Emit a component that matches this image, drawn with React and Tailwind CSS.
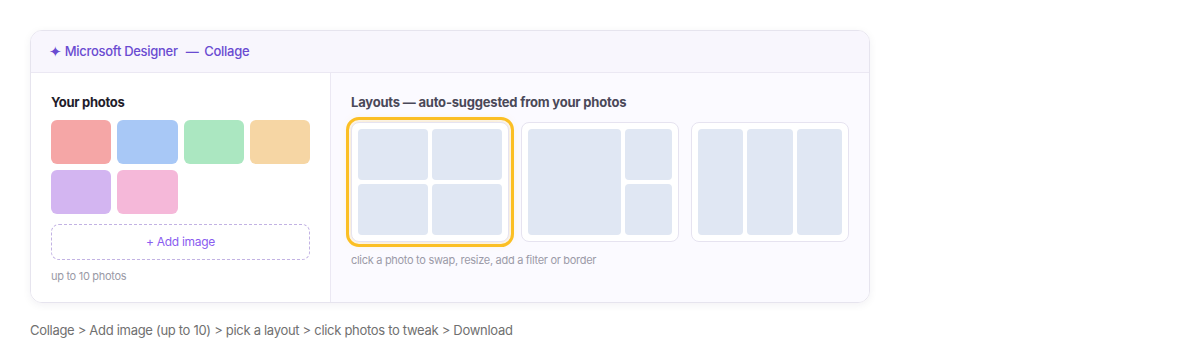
import React from "react";

const photos = [
  "bg-[#f5a6a6]",
  "bg-[#a8c8f6]",
  "bg-[#abe7c1]",
  "bg-[#f6d6a4]",
  "bg-[#d3b5f1]",
  "bg-[#f5b8d9]",
];

function Cell({ className = "" }) {
  return <div className={"rounded-[4px] bg-[#e0e7f3] " + className} />;
}

export default function App() {
  return (
    <div className="min-h-screen bg-white p-[30px] font-['Inter',sans-serif] tracking-[-0.3px]">
      <div className="w-[840px] overflow-hidden rounded-[12px] border border-[#e6e4ee] shadow-[0_2px_8px_rgba(30,20,60,0.06)]">
        <div className="flex h-[42px] items-center border-b border-[#ebe8f3] bg-[#f8f6fd] px-[18px] text-[13px] font-medium text-[#6a4bd1]">
          <span className="mr-[3px] text-[15px] leading-none">✦</span>
          <span>Microsoft Designer</span>
          <span className="ml-[8px] mr-[6px]">—</span>
          <span>Collage</span>
        </div>

        <div className="flex">
          <div className="w-[300px] border-r border-[#ebe8f3] bg-white px-5 pt-5 pb-[18px]">
            <h3 className="mb-[9px] text-[13px] leading-[18px] font-bold text-[#1f1d2b]">
              Your photos
            </h3>
            <div className="grid grid-cols-4 gap-[6px]">
              {photos.map((c, i) => (
                <div key={i} className={"h-[44px] rounded-[6px] " + c} />
              ))}
            </div>
            <button className="mt-[10px] flex h-[36px] w-full items-center justify-center rounded-[8px] border border-dashed border-[#c2b2e3] text-[12px] text-[#8a5cf0]">
              + Add image
            </button>
            <p className="mt-[8px] text-[11px] leading-[16px] text-[#9a9aa6]">
              up to 10 photos
            </p>
          </div>

          <div className="flex-1 bg-[#fbfaff] px-5 pt-5 pb-5">
            <h3 className="mb-[11px] text-[13px] leading-[18px] font-bold tracking-[-0.2px] text-[#4a4858]">
              Layouts — auto-suggested from your photos
            </h3>
            <div className="grid grid-cols-3 gap-3">
              <div className="grid h-[120px] grid-cols-2 grid-rows-2 gap-1 rounded-[8px] border border-[#e6e3f0] bg-white p-[6px] outline-[3px] outline-offset-2 outline-[#fbbf24] outline-solid shadow-[0_0_10px_rgba(251,191,36,0.35)]">
                <Cell />
                <Cell />
                <Cell />
                <Cell />
              </div>
              <div className="grid h-[120px] grid-cols-[2fr_1fr] grid-rows-2 gap-1 rounded-[8px] border border-[#e6e3f0] bg-white p-[6px]">
                <Cell className="row-span-2" />
                <Cell />
                <Cell />
              </div>
              <div className="grid h-[120px] grid-cols-3 gap-1 rounded-[8px] border border-[#e6e3f0] bg-white p-[6px]">
                <Cell />
                <Cell />
                <Cell />
              </div>
            </div>
            <p className="mt-[10px] text-[11px] leading-[16px] text-[#9c9aa8]">
              click a photo to swap, resize, add a filter or border
            </p>
          </div>
        </div>
      </div>

      <p className="mt-[17px] text-[13px] leading-[20px] text-[#707070]">
        Collage &gt; Add image (up to 10) &gt; pick a layout &gt; click photos to tweak &gt; Download
      </p>
    </div>
  );
}
